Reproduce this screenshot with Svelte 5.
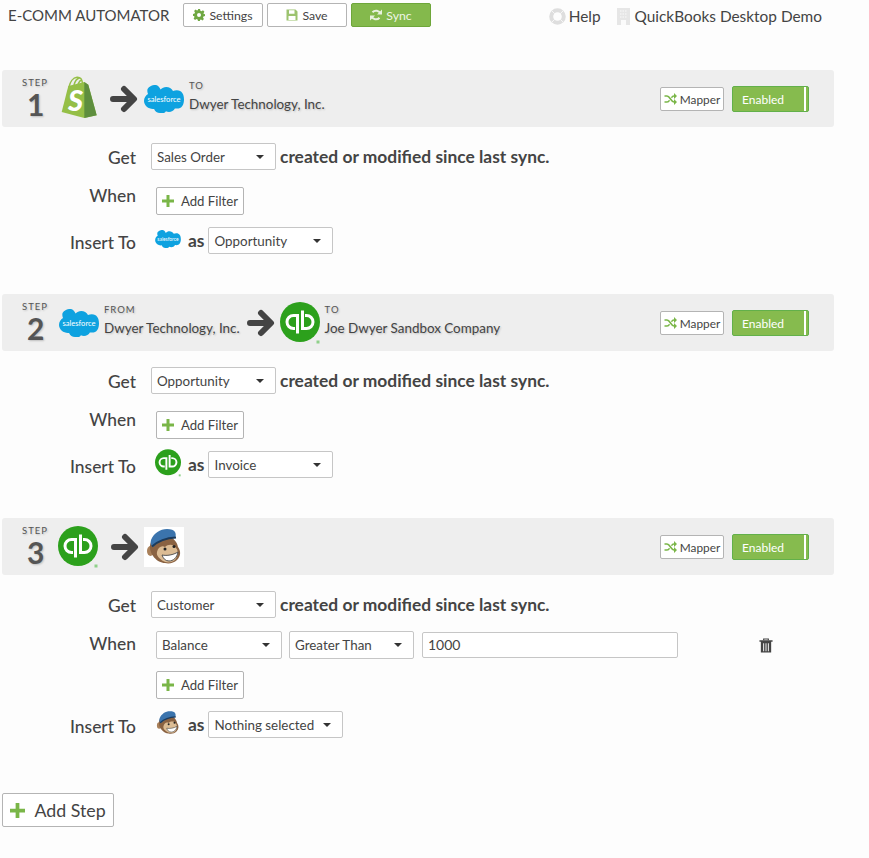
<script>
  const steps = [
    { n: 1, get: 'Sales Order', insert: 'sf', as: 'Opportunity', asWide: false, filters: false },
    { n: 2, get: 'Opportunity', insert: 'qb', as: 'Invoice', asWide: false, filters: false },
    { n: 3, get: 'Customer', insert: 'mc', as: 'Nothing selected', asWide: true, filters: true }
  ];
</script>

{#snippet plus(size)}
  <svg class="plus" width={size} height={size} viewBox="0 0 12 12"><path d="M4.500 0h3v4.500H12v3H7.500V12h-3V7.500H0v-3h4.500z" fill="#7ab648"/></svg>
{/snippet}

{#snippet arrow()}
  <svg class="arrow" width="28" height="30" viewBox="0 0 28 30"><path d="M3 15h20M14 5l10 10-10 10" fill="none" stroke="#444" stroke-width="6" stroke-linecap="round" stroke-linejoin="round"/></svg>
{/snippet}

{#snippet sf(w, h)}
  <svg width={w} height={h} viewBox="0 0 40 28">
    <path d="M16.600 4.500C18 3 20 2 22.200 2c2.900 0 5.400 1.600 6.800 4 1.200-.5 2.500-.8 3.800-.8C37.900 5.200 40 9.300 40 14.400S37.900 23.600 32.800 23.600c-.7 0-1.300-.1-1.900-.2-1.200 2.100-3.400 3.500-6 3.500-1.100 0-2.100-.2-3-.7C20.900 28.500 18.500 28 16 28c-2.700 0-5-1.700-5.900-4.100-.4.100-.8.100-1.200.100C4.500 24 0 20.400 0 16c0-3 1.600-5.600 4-7 -.5-1.100-.7-2.300-.7-3.500C3.300 2 8 0 11.500 0c2 0 3.900 2 5.100 4.500z" fill="#0ea2e0"/>
    <text x="20" y="16.500" text-anchor="middle" class="sftext">salesforce</text>
  </svg>
{/snippet}

{#snippet qb(size)}
  <svg width={size} height={size + 2} viewBox="0 0 40 42">
    <circle cx="20" cy="20" r="20" fill="#2ca01c"/>
    <rect x="36.500" y="38.500" width="3" height="3" fill="#8fd08a"/>
    <path d="M17.500 31.500V13.500H13.500a6.500 6.500 0 0 0 0 13H15" fill="none" stroke="#fff" stroke-width="3"/>
    <path d="M22.500 8.500V26.500H26.500a6.500 6.500 0 0 0 0-13H25" fill="none" stroke="#fff" stroke-width="3"/>
  </svg>
{/snippet}

{#snippet mc(size, bg)}
  <svg width={size} height={size} viewBox="0 0 40 40">
    {#if bg}<rect width="40" height="40" fill="#fff"/>{/if}
    <ellipse cx="6.500" cy="24" rx="3.500" ry="5" fill="#a9805a"/>
    <path d="M6 18c1-6 8-9 15-9s12 5 13 11c3 4 3 9-1 13-3 3-8 4-12 3C13 36 5 27 6 18z" fill="#8a6242"/>
    <path d="M13 25c1-5 5-7 8-5 3-3 9-3 11 1 3 3 2 9-1 12-3 3-9 3-12 1-3-2-7-5-6-9z" fill="#dcbc94"/>
    <path d="M7 13C10 6 16 2 23 2c4 0 7 1 8 3 1 2 1 4 0 6-8 0-16 3-22 9-2-1-3-4-2-7z" fill="#3b74ad"/>
    <path d="M8 19.500C14 14 22 11 32 10.500" fill="none" stroke="#1c3b5c" stroke-width="2"/>
    <circle cx="21" cy="22" r="1.500" fill="#222"/>
    <circle cx="30" cy="19.500" r="1.500" fill="#222"/>
    <path d="M18 28c5 1 11 0 16-3-1 6-5 9-9 9s-6-3-7-6z" fill="#fff" stroke="#444" stroke-width=".9"/>
  </svg>
{/snippet}

{#snippet caret()}
  <span class="caret"></span>
{/snippet}

{#snippet select(label, cls)}
  <div class="select {cls}"><span>{label}</span>{@render caret()}</div>
{/snippet}

{#snippet addFilter()}
  <button class="btn addfilter">{@render plus(12)}<span>Add Filter</span></button>
{/snippet}

{#snippet entity(kicker, name)}
  <div class="entity"><small>{kicker}</small><span>{name}</span></div>
{/snippet}

<div class="page">
  <header>
    <div class="left">
      <h1>E-COMM AUTOMATOR</h1>
      <button class="btn top">
        <svg width="12" height="12" viewBox="0 0 24 24"><path d="M10 0h4l.8 3.400 2.200.9 3-1.800 2.800 2.800-1.800 3 .9 2.200L24 10v4l-3.100.8-.9 2.200 1.800 3-2.800 2.800-3-1.800-2.200.9L14 24h-4l-.8-3.100-2.200-.9-3 1.800-2.800-2.800 1.800-3-.9-2.200L0 14v-4l3.100-.8.9-2.200-1.800-3L5 1.200l3 1.800 2.200-.9zM12 8a4 4 0 1 0 0 8 4 4 0 0 0 0-8z" fill="#6fa842" fill-rule="evenodd"/></svg>
        Settings
      </button>
      <button class="btn top">
        <svg width="12" height="12" viewBox="0 0 24 24"><path d="M1 1h18l4 4v18H1zM6 2.500v7h11v-7zM5 14v8h14v-8z" fill="#9cc36f" fill-rule="evenodd"/></svg>
        Save
      </button>
      <button class="btn top sync">
        <svg width="12" height="12" viewBox="0 0 24 24"><path d="M21 9.500A9.500 9.500 0 0 0 5 6.500M3 14.500A9.500 9.500 0 0 0 19 17.500" fill="none" stroke="#e8f1df" stroke-width="4"/><path d="M24 1v10H14zM0 23V13h10z" fill="#e8f1df"/></svg>
        Sync
      </button>
    </div>
    <nav>
      <span class="navitem">
        <svg width="17" height="17" viewBox="0 0 17 17"><circle cx="8.500" cy="8.500" r="6.300" fill="none" stroke="#dedede" stroke-width="4"/><path d="M3 3l3 3M14 3l-3 3M3 14l3-3M14 14l-3-3" stroke="#f6f6f6" stroke-width="1"/></svg>
        Help
      </span>
      <span class="navitem demo">
        <svg width="13" height="17" viewBox="0 0 13 17"><rect width="13" height="17" fill="#e6e6e6"/><rect x="4" y="12" width="5" height="5" fill="#fbfbfb"/><path d="M3 3h7M3 6h7M3 9h7" stroke="#f3f3f3" stroke-width="1.500" stroke-dasharray="1.500 1"/></svg>
        QuickBooks Desktop Demo
      </span>
    </nav>
  </header>

  {#each steps as s}
    <section class="step">
      <div class="bar">
        <div class="stepno"><small>STEP</small><b>{s.n}</b></div>
        <div class="flow flow{s.n}">
          {#if s.n === 1}
            <svg class="shopify" width="37" height="43" viewBox="0 0 37 43">
              <path d="M8.300 10 1.700 36 24.300 42 36.700 39.300 28.300 8.700 24.300 6z" fill="#95bf47"/>
              <path d="M24.300 6 28.300 8.700 36.700 39.300 24.300 42z" fill="#5e8e3e"/>
              <path d="M9 11C10 6 13 1.500 17 1.200 20 1 22 3 22.500 7M14 9C15 5 17 2.500 19.500 2M18 8c1-2 2-3.500 4-4.500" fill="none" stroke="#95bf47" stroke-width="1.500"/>
              <text x="8" y="35" class="shopS">S</text>
            </svg>
            {@render arrow()}
            {@render sf(40, 28)}
            {@render entity('TO', 'Dwyer Technology, Inc.')}
          {:else if s.n === 2}
            {@render sf(40, 28)}
            {@render entity('FROM', 'Dwyer Technology, Inc.')}
            {@render arrow()}
            {@render qb(40)}
            {@render entity('TO', 'Joe Dwyer Sandbox Company')}
          {:else}
            {@render qb(40)}
            {@render arrow()}
            {@render mc(40, true)}
          {/if}
        </div>
        <div class="actions">
          <button class="btn mapper">
            <svg width="13" height="12" viewBox="0 0 26 24"><path d="M1 6h5c6 0 8 12 14 12h1M1 18h5c2.500 0 4-1.500 5-3.500M15 9.500C16 7.500 17.500 6 20 6h1" fill="none" stroke="#7ab648" stroke-width="3.200"/><path d="M20 0l6 6-6 6zM20 12l6 6-6 6z" fill="#7ab648"/></svg>
            Mapper
          </button>
          <div class="toggle"><span>Enabled</span><i></i></div>
        </div>
      </div>

      <div class="row getrow">
        <label>Get</label>
        <div class="ctl">
          {@render select(s.get, 'w125')}
          <strong>created or modified since last sync.</strong>
        </div>
      </div>

      <div class="row whenrow">
        <label>When</label>
        <div class="ctl indent">
          {#if s.filters}
            <div class="filter">
              {@render select('Balance', 'w126')}
              {@render select('Greater Than', 'w125')}
              <div class="input">1000</div>
              <svg class="trash" width="14" height="15" viewBox="0 0 14 16"><path d="M4.500 2.500V1h5v1.500" fill="none" stroke="#444" stroke-width="1.200"/><path d="M0 2.500h14v1.500H0zM1.500 4h11v11.500h-11zM4 5.500v8.500h1V5.500zM6.500 5.500v8.500h1V5.500zM9 5.500v8.500h1V5.500z" fill="#444" fill-rule="evenodd"/></svg>
            </div>
          {/if}
          {@render addFilter()}
        </div>
      </div>

      <div class="row insertrow">
        <label>Insert To</label>
        <div class="ctl">
          <span class="insicon">
            {#if s.insert === 'sf'}{@render sf(26, 18)}
            {:else if s.insert === 'qb'}{@render qb(26)}
            {:else}{@render mc(26, false)}{/if}
          </span>
          <strong class="as">as</strong>
          {@render select(s.as, s.asWide ? 'w135' : 'w125')}
        </div>
      </div>
    </section>
  {/each}

  <button class="btn addstep">{@render plus(15)}<span>Add Step</span></button>
</div>

<style>
  :global(body) { margin: 0; background: #fdfdfd; }
  .page {
    width: 869px; height: 858px; box-sizing: border-box;
    font-family: Lato, "Open Sans", sans-serif; color: #444; overflow: hidden;
  }
  header {
    display: flex; justify-content: space-between; align-items: center;
    height: 24px; padding: 3px 47px 0 8px; margin-bottom: 43px;
  }
  .left { display: flex; align-items: center; }
  h1 { margin: 0 14px 0 0; width: 161px; font-size: 15px; font-weight: 400; color: #444; white-space: nowrap; }
  .btn {
    font-family: inherit; color: #444; background: #fff; border: 1px solid #b4b4b4;
    border-radius: 2px; box-sizing: border-box; padding: 0;
    display: inline-flex; align-items: center; justify-content: center;
  }
  .top { width: 80px; height: 24px; font-size: 12.300px; margin-right: 4px; gap: 4px; }
  .sync { background: #84b94c; border-color: #6ea63a; color: #eef5e6; }
  nav { display: flex; align-items: center; gap: 16px; font-size: 15.400px; color: #444; padding-top: 2px; }
  .navitem { display: inline-flex; align-items: center; gap: 3px; white-space: nowrap; }
  .demo { gap: 5px; }
  .step { margin-bottom: 40px; padding-left: 2px; width: 832px; }
  .bar {
    height: 57px; background: #eee; border-radius: 3px;
    display: flex; align-items: center; position: relative;
    text-shadow: 1px 1px 2px rgba(0,0,0,.2);
  }
  .stepno { width: 45px; margin-left: 20px; display: flex; flex-direction: column; margin-top: -3px; }
  .stepno small { font-size: 9.500px; letter-spacing: 1px; line-height: 10px; font-weight: 400; color: #555; }
  .stepno b { font-size: 30px; line-height: 26px; margin-top: 3px; font-weight: 700; color: #555; padding-left: 5px; }
  .flow { display: flex; align-items: center; flex: 1; }
  .flow1 { margin-left: -7px; }
  .flow2 { margin-left: -8px; }
  .flow3 { margin-left: -9px; }
  .flow1 .arrow { margin: 0 6px 0 13px; }
  .flow1 .shopify { margin-top: -3px; }
  .flow2 .arrow { margin: 0 5px 0 7px; }
  .flow3 .arrow { margin: 0 5px 0 13px; }
  .entity { display: flex; flex-direction: column; margin-left: 5px; margin-top: -3px; }
  .entity small { font-size: 9.500px; letter-spacing: 1px; line-height: 12px; font-weight: 400; color: #555; }
  .entity span { font-size: 13.400px; line-height: 20px; color: #444; white-space: nowrap; margin-top: 2px; }
  .sftext { font-family: Lato, sans-serif; font-size: 7.600px; fill: #fff; text-shadow: none; }
  .shopS { font-family: Lato, sans-serif; font-size: 29px; font-weight: 900; font-style: italic; fill: #fff; text-shadow: none; }
  .actions { display: flex; align-items: center; margin-right: 25px; margin-top: 1px; gap: 8px; text-shadow: none; }
  .mapper { width: 64px; height: 24px; font-size: 11.800px; gap: 3px; }
  .toggle {
    width: 77px; height: 26px; box-sizing: border-box; background: #86bb4e; border: 1px solid #62b04a;
    border-radius: 2px; color: #fff; font-size: 12px; display: flex; align-items: center;
    justify-content: space-between; padding-left: 9px;
  }
  .toggle i { width: 2px; height: 100%; background: #fff; margin-right: 2px; }
  .row { display: flex; align-items: flex-start; }
  .row label { width: 134px; text-align: right; font-size: 17.400px; font-weight: 500; color: #444; flex: none; }
  .ctl { display: flex; align-items: center; }
  .ctl strong { font-size: 17.400px; font-weight: 700; color: #444; white-space: nowrap; }
  .getrow { margin-top: 16px; height: 27px; }
  .getrow label { line-height: 29px; }
  .getrow .ctl { margin-left: 15px; gap: 4px; }
  .whenrow { margin-top: 17px; }
  .whenrow label { line-height: 18px; margin-top: 0; }
  .indent { margin-left: 20px; flex-direction: column; align-items: flex-start; flex: 1; }
  .insertrow { margin-top: 12px; height: 27px; }
  .insertrow label { line-height: 32px; }
  .insertrow .ctl { margin-left: 19px; }
  .insicon { width: 26px; height: 26px; display: flex; align-items: center; margin-top: -4px; }
  .as { margin: 0 4px 0 7px; }
  .select {
    height: 27px; box-sizing: border-box; background: #fff; border: 1px solid #c6c6c6; border-radius: 2px;
    display: flex; align-items: center; justify-content: space-between; padding: 0 11px 0 5px;
    font-size: 13.400px; color: #444; white-space: nowrap;
  }
  .w125 { width: 125px; }
  .w126 { width: 126px; }
  .w135 { width: 135px; }
  .caret { width: 0; height: 0; border-left: 4px solid transparent; border-right: 4px solid transparent; border-top: 4px solid #333; }
  .addfilter { width: 88px; height: 28px; font-size: 13.200px; gap: 7px; }
  .filter { display: flex; align-items: center; margin-bottom: 12px; margin-top: -4px; height: 28px; }
  .filter .select { margin-right: 7px; height: 28px; }
  .input {
    width: 256px; height: 26px; margin-left: 1px; box-sizing: border-box; background: #fff; border: 1px solid #c6c6c6;
    border-radius: 2px; font-size: 14px; padding: 0 5px; line-height: 24px; color: #444;
  }
  .trash { margin-left: 81px; }
  .addstep { width: 112px; height: 34px; margin: 15px 0 0 2px; font-size: 17.800px; gap: 9px; }
</style>
